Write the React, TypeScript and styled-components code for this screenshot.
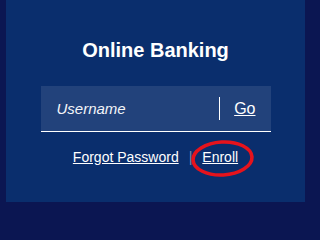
import React from "react";
import styled, { createGlobalStyle } from "styled-components";

const Global = createGlobalStyle`
  html, body { margin: 0; padding: 0; background: #0b1652; }
  body { font-family: "Liberation Sans", Arial, sans-serif; }
`;

const Page = styled.div`
  width: 311px;
  height: 204px;
  background: #0b1652;
  overflow: hidden;
`;

const Panel = styled.section`
  margin: 0 6px;
  height: 202px;
  background: #0a2e6d;
  display: flex;
  flex-direction: column;
  align-items: center;
  padding-top: 39px;
  box-sizing: border-box;
  color: #fff;
`;

const Title = styled.h2`
  margin: 0;
  font-size: 20px;
  line-height: 23px;
  font-weight: 700;
`;

const Field = styled.div`
  margin-top: 24px;
  width: 230px;
  height: 46px;
  box-sizing: border-box;
  background: #22427b;
  border-bottom: 1px solid #ffffff;
  display: flex;
  align-items: center;
  padding: 0 15px 0 16px;
`;

const Input = styled.span`
  flex: 1;
  font-size: 15px;
  line-height: 17px;
  font-style: italic;
  color: #f2f4f8;
`;

const Divider = styled.span`
  width: 1px;
  height: 23px;
  background: #ffffff;
  margin-right: 14px;
`;

const Go = styled.a`
  font-size: 16px;
  line-height: 18px;
  color: #fff;
  text-decoration: underline;
`;

const Links = styled.div`
  margin-top: 17px;
  display: flex;
  align-items: center;
  font-size: 14px;
  line-height: 16px;
`;

const Link = styled.a`
  position: relative;
  color: #fff;
  text-decoration: underline;
`;

const Sep = styled.span`
  margin: 0 10px;
  color: #7f8aa8;
`;

const Circle = styled.svg`
  position: absolute;
  left: -11px;
  top: -9px;
  width: 63px;
  height: 37px;
  overflow: visible;
  pointer-events: none;
`;

export default function App() {
  return (
    <Page>
      <Global />
      <Panel>
        <Title>Online Banking</Title>
        <Field>
          <Input>Username</Input>
          <Divider />
          <Go>Go</Go>
        </Field>
        <Links>
          <Link>Forgot Password</Link>
          <Sep>|</Sep>
          <Link>
            Enroll
            <Circle viewBox="0 0 63 37">
              <ellipse
                cx="31.5"
                cy="18.5"
                rx="29.5"
                ry="16.5"
                fill="none"
                stroke="#e6131c"
                strokeWidth="3.6"
                transform="rotate(-3 31.5 18.5)"
              />
            </Circle>
          </Link>
        </Links>
      </Panel>
    </Page>
  );
}
